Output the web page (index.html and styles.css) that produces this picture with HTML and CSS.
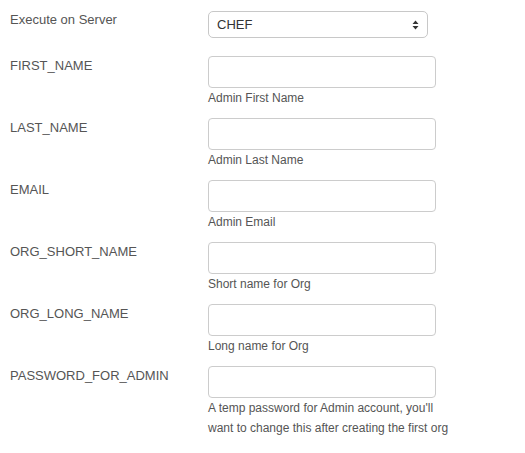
FILE: index.html
```html
<!DOCTYPE html>
<html>
<head>
<meta charset="utf-8">
<link rel="stylesheet" href="styles.css">
</head>
<body>
<form class="form">
  <div class="row row-first">
    <label class="label">Execute on Server</label>
    <div class="field">
      <div class="select">
        <span class="select-text">CHEF</span>
        <svg class="arrows" width="7" height="10" viewBox="0 0 7 10"><path d="M0.5 4 L3.5 0.5 L6.5 4 Z M0.5 6 L6.5 6 L3.5 9.5 Z" fill="#333"/></svg>
      </div>
    </div>
  </div>
  <div class="row">
    <label class="label">FIRST_NAME</label>
    <div class="field">
      <div class="input"></div>
      <div class="help">Admin First Name</div>
    </div>
  </div>
  <div class="row">
    <label class="label">LAST_NAME</label>
    <div class="field">
      <div class="input"></div>
      <div class="help">Admin Last Name</div>
    </div>
  </div>
  <div class="row">
    <label class="label">EMAIL</label>
    <div class="field">
      <div class="input"></div>
      <div class="help">Admin Email</div>
    </div>
  </div>
  <div class="row">
    <label class="label">ORG_SHORT_NAME</label>
    <div class="field">
      <div class="input"></div>
      <div class="help">Short name for Org</div>
    </div>
  </div>
  <div class="row">
    <label class="label">ORG_LONG_NAME</label>
    <div class="field">
      <div class="input"></div>
      <div class="help">Long name for Org</div>
    </div>
  </div>
  <div class="row">
    <label class="label">PASSWORD_FOR_ADMIN</label>
    <div class="field">
      <div class="input"></div>
      <div class="help">A temp password for Admin account, you'll want to change this after creating the first org</div>
    </div>
  </div>
</form>
</body>
</html>
```

FILE: styles.css
```css
html, body {
  margin: 0;
  padding: 0;
  background: #fff;
}
body {
  font-family: "Liberation Sans", Arial, sans-serif;
  color: #555;
}
.form {
  display: flex;
  flex-direction: column;
  padding: 11px 0 0 10px;
}
.row {
  display: grid;
  grid-template-columns: 198px 228px;
  margin-bottom: 10px;
}
.row-first {
  margin-bottom: 18px;
}
.label {
  font-size: 13px;
  line-height: 20px;
  color: #555;
}
.row-first .label {
  margin-top: -1px;
}
.select {
  box-sizing: border-box;
  width: 220px;
  height: 27px;
  border: 1px solid #c8c8c8;
  border-radius: 5px;
  background: #fff;
  display: flex;
  align-items: center;
  justify-content: space-between;
  padding: 0 8px 0 8px;
}
.select-text {
  font-size: 13px;
  color: #333;
}
.arrows {
  display: block;
}
.input {
  box-sizing: border-box;
  width: 228px;
  height: 32px;
  border: 1px solid #ccc;
  border-radius: 4px;
  background: #fff;
}
.help {
  font-size: 12px;
  line-height: 20px;
  color: #555;
  width: 245px;
}
```
